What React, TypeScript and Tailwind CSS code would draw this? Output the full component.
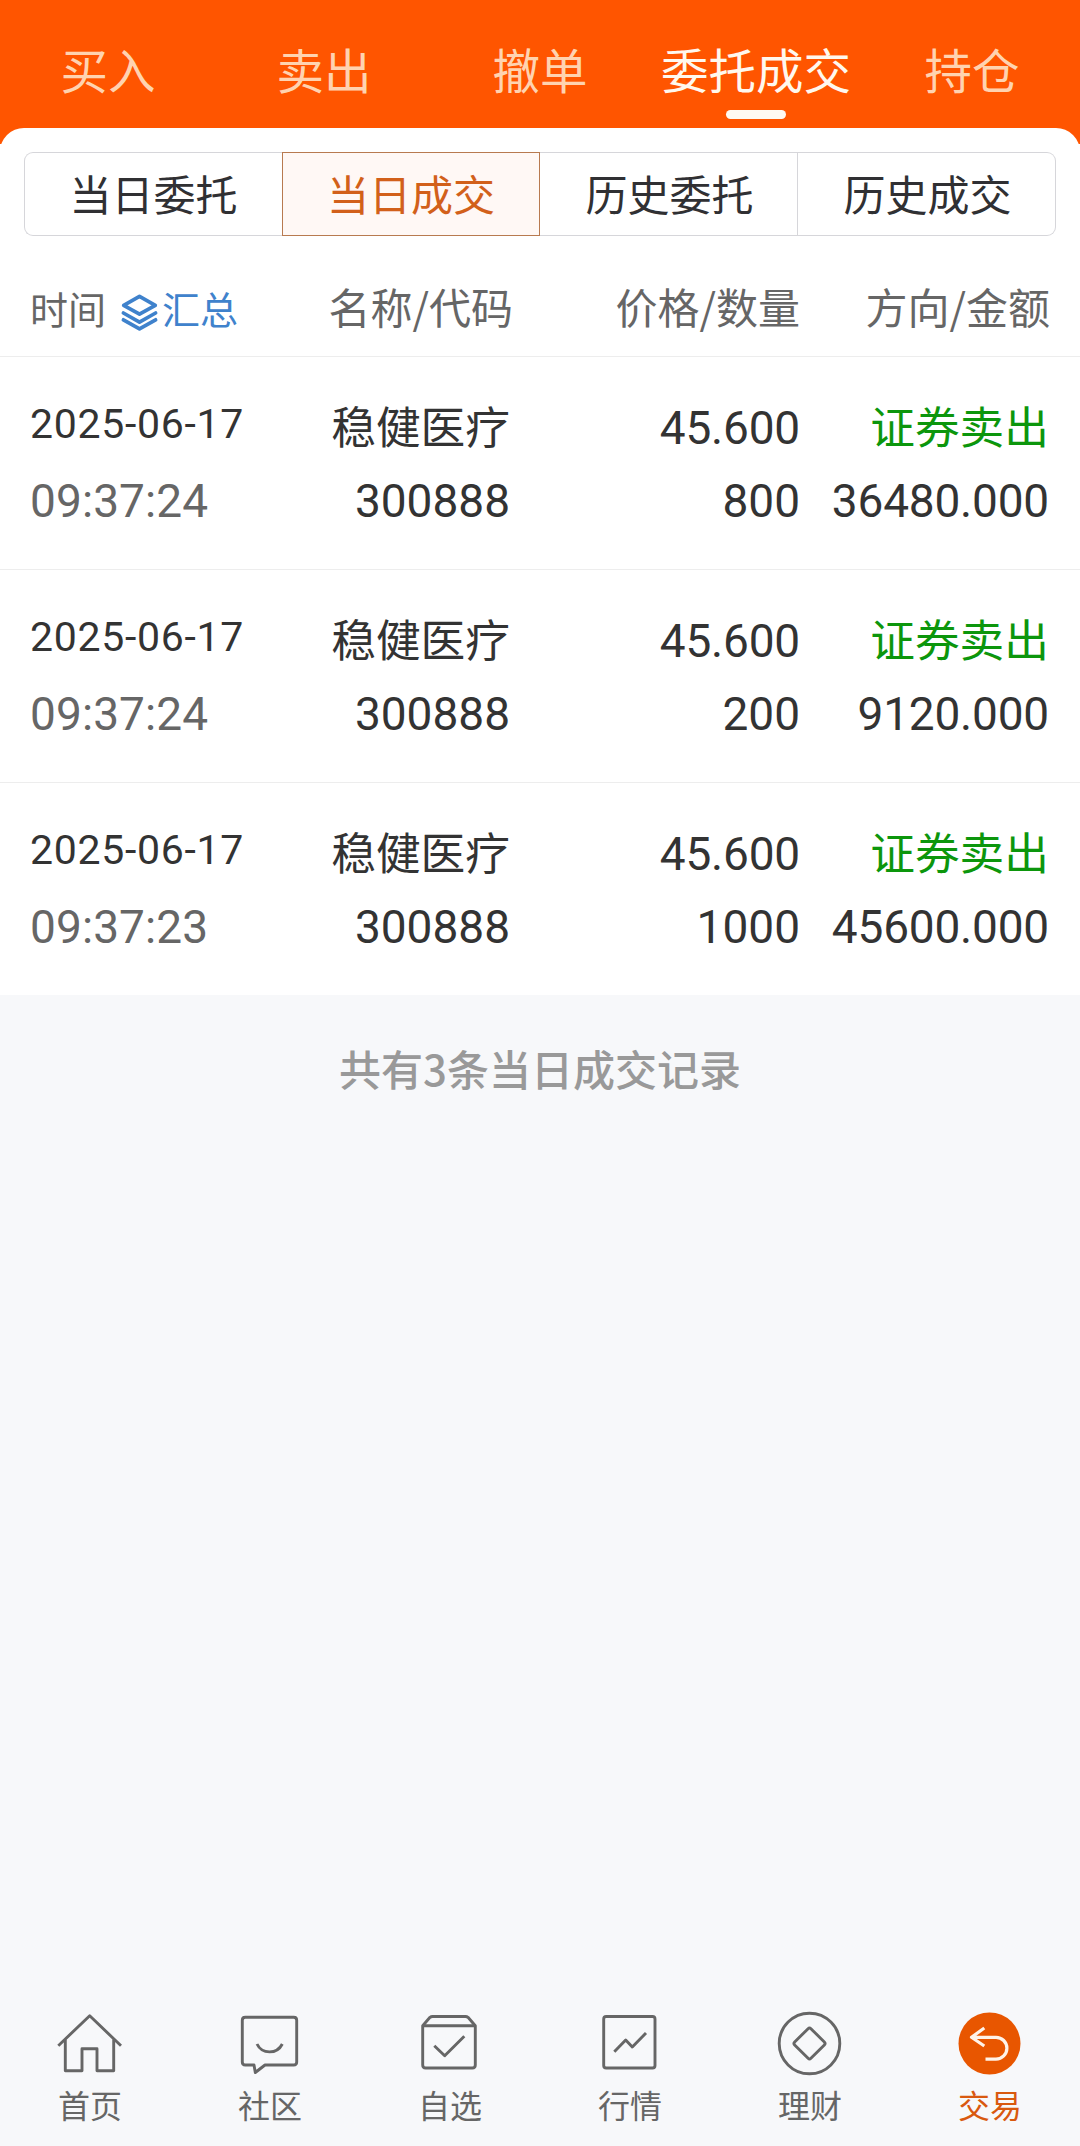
import type { ReactNode } from 'react'

const topTabs = ['买入', '卖出', '撤单', '委托成交', '持仓']
const segments = ['当日委托', '当日成交', '历史委托', '历史成交']

const records = [
  { date: '2025-06-17', time: '09:37:24', name: '稳健医疗', code: '300888', price: '45.600', count: '800', side: '证券卖出', amount: '36480.000' },
  { date: '2025-06-17', time: '09:37:24', name: '稳健医疗', code: '300888', price: '45.600', count: '200', side: '证券卖出', amount: '9120.000' },
  { date: '2025-06-17', time: '09:37:23', name: '稳健医疗', code: '300888', price: '45.600', count: '1000', side: '证券卖出', amount: '45600.000' },
]

const navItems: { label: string; active?: boolean; icon: ReactNode }[] = [
  {
    label: '首页',
    icon: (
      <>
        <path d="M4.3 37.7 35.7 7.8 67 37.7" />
        <path d="M11.3 31.5V62.7H28V40.7H43V62.7H59.7V31.5" />
      </>
    ),
  },
  {
    label: '社区',
    icon: (
      <>
        <path d="M11.3 9.3H59.7Q62.7 9.3 62.7 12.3V54Q62.7 57 59.7 57H31L21.3 64.5 20 57H11.3Q8.3 57 8.3 54V12.3Q8.3 9.3 11.3 9.3Z" />
        <path d="M23 36C28 46.5 43 46.5 48.3 36" />
      </>
    ),
  },
  {
    label: '自选',
    icon: (
      <>
        <path d="M8.7 17.7 16 9.3Q17 8.5 18.5 8.5H51.5Q53 8.5 54 9.3L61.3 17.7V57Q61.3 60 58.3 60H11.7Q8.7 60 8.7 57Z" />
        <path d="M8.7 17.7H61.3M20.3 37.7 30.7 47.7 50.3 28.3" />
      </>
    ),
  },
  {
    label: '行情',
    icon: (
      <>
        <rect x="9.7" y="8.5" width="51.3" height="51.5" rx="2.5" />
        <path d="M20.3 43.7 31.7 32 38.3 39 52 25" />
      </>
    ),
  },
  {
    label: '理财',
    icon: (
      <>
        <circle cx="35.5" cy="35.5" r="30.3" />
        <rect x="24" y="24" width="23" height="23" rx="2" transform="rotate(45 35.5 35.5)" />
      </>
    ),
  },
  {
    label: '交易',
    active: true,
    icon: (
      <>
        <circle cx="35.5" cy="35.5" r="31" fill="#e85600" stroke="none" />
        <path d="M30.3 20 17.5 29.3 30.3 38M17.5 29.3H42A10.9 10.9 0 0 1 42 51.1H31.5" stroke="#fff3e8" strokeWidth="3.2" />
      </>
    ),
  },
]

function LayersIcon() {
  return (
    <svg className="h-11 w-11" viewBox="0 0 44 44" fill="none" stroke="#3f82cc" strokeWidth="3.7" strokeLinejoin="round" strokeLinecap="round">
      <path d="M21.5 6.4 37.3 15.3 21.5 24.2 5.7 15.3Z" />
      <path d="M5.4 23 21.5 32.1 37.6 23" />
      <path d="M5.4 29.8 21.5 38.9 37.6 29.8" />
    </svg>
  )
}

function TopTabs() {
  return (
    <div className="grid h-32 grid-cols-5">
      {topTabs.map((tab) => {
        const active = tab === '委托成交'
        return (
          <div key={tab} className="flex flex-col items-center pt-[45px]">
            <span className={`text-[47.5px] leading-[48px] ${active ? 'text-[#fff8ee]' : 'text-[#ffd3b0]'}`}>{tab}</span>
            {active && <span className="mt-[17px] h-[9px] w-[60px] rounded-full bg-[#fffaf3]" />}
          </div>
        )
      })}
    </div>
  )
}

function Segments() {
  return (
    <div className="mx-6 grid h-[84px] grid-cols-4">
      {segments.map((item, i) => {
        const active = i === 1
        return (
          <div
            key={item}
            className={`flex items-center justify-center pb-[3px] text-[42px] leading-none ${
              active
                ? 'border border-[#b87a50] bg-[#fff8f5] text-[#d2601a]'
                : 'border-y border-[#d6d6da] text-[#303033]'
            } ${i === 0 ? 'rounded-l-[9px] border-l' : ''} ${i === 2 ? 'border-r pl-[2px]' : ''} ${i === 3 ? 'rounded-r-[9px] border-r pl-[2px]' : ''}`}
          >
            {item}
          </div>
        )
      })}
    </div>
  )
}

export default function App() {
  return (
    <div className="flex h-[2146px] w-[1080px] flex-col bg-[#f7f8fa] font-['Noto_Sans_CJK_SC',sans-serif]">
      <div className="bg-[#ff5500]">
        <TopTabs />
        <div className="h-4 overflow-hidden">
          <div className="h-12 rounded-t-3xl bg-white" />
        </div>
      </div>

      <div className="bg-white pt-2">
        <Segments />

        <div className="grid h-[121px] grid-cols-[270px_213px_287px_250px] border-b border-[#ededed] px-[30px] pt-[49px] text-[42px] leading-[42px] text-[#666]">
          <div className="flex items-start pt-[4px] text-[38px] leading-[38px]">
            <span>时间</span>
            <span className="mt-px ml-[12px]">
              <LayersIcon />
            </span>
            <span className="text-[#3f82cc]">汇总</span>
          </div>
          <span className="text-right">名称/代码</span>
          <span className="text-right">价格/数量</span>
          <span className="text-right">方向/金额</span>
        </div>

        {records.map((r, i) => (
          <div
            key={i}
            className={`grid grid-cols-[270px_210px_290px_249px] px-[30px] pt-[46px] text-[46px] text-[#333] ${
              i < records.length - 1 ? 'h-[213px] border-b border-[#ededed]' : 'h-[212px]'
            }`}
          >
            <div className="flex flex-col font-[Roboto,sans-serif]">
              <span className="h-[72px] text-[41px] leading-[43px] tracking-[0.7px]">{r.date}</span>
              <span className="leading-[53px] tracking-[0.1px] text-[#666]">{r.time}</span>
            </div>
            <div className="flex flex-col text-right">
              <span className="h-[72px] text-[44.7px] leading-[44px]">{r.name}</span>
              <span className="font-[Roboto,sans-serif] leading-[53px]">{r.code}</span>
            </div>
            <div className="flex flex-col text-right font-[Roboto,sans-serif]">
              <span className="h-[72px] leading-[51px] tracking-[-0.2px]">{r.price}</span>
              <span className="leading-[53px]">{r.count}</span>
            </div>
            <div className="flex flex-col text-right">
              <span className="h-[72px] text-[44.7px] leading-[44px] text-[#0c960c]">{r.side}</span>
              <span className="font-[Roboto,sans-serif] leading-[53px] tracking-[-0.2px]">{r.amount}</span>
            </div>
          </div>
        ))}
      </div>

      <p className="pt-[52px] text-center text-[42px] leading-[42px] font-medium text-[#999]">共有3条当日成交记录</p>

      <nav className="mt-auto grid h-[138px] grid-cols-6">
        {navItems.map((item) => (
          <div key={item.label} className={`flex flex-col items-center ${item.active ? 'text-[#d9590f]' : 'text-[#666]'}`}>
            <svg className="size-[72px]" viewBox="0 0 72 72" fill="none" stroke="currentColor" strokeWidth="2.9" strokeLinejoin="round">
              {item.icon}
            </svg>
            <span className="mt-[8px] text-[32px] leading-[32px]">{item.label}</span>
          </div>
        ))}
      </nav>
    </div>
  )
}
